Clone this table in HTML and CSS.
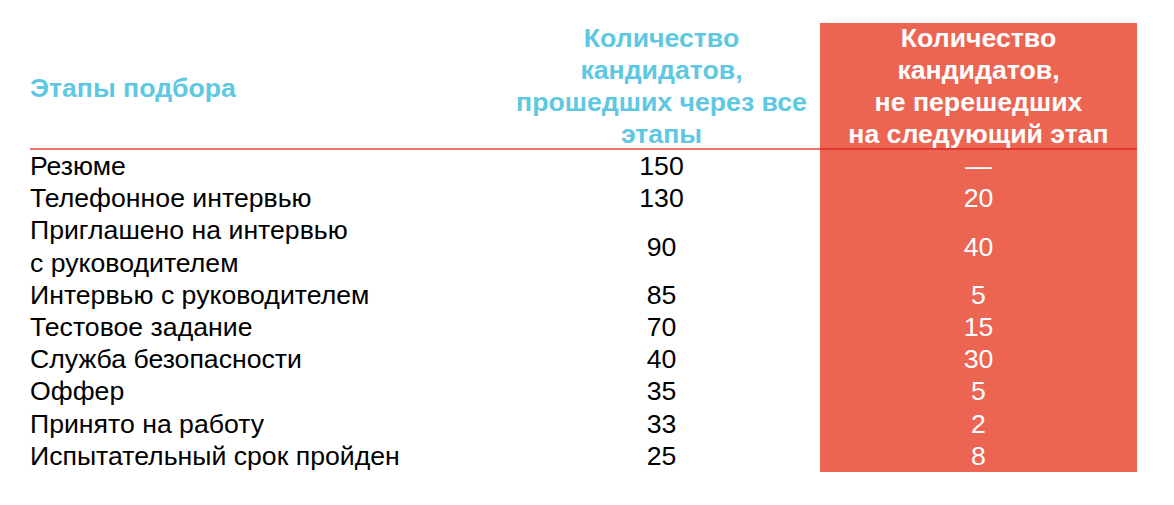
FILE: index.html
```html
<!DOCTYPE html>
<html lang="ru">
<head>
<meta charset="utf-8">
<title>Этапы подбора</title>
<link rel="stylesheet" href="styles.css">
</head>
<body>
<div class="table">
  <div class="th th-stage">Этапы подбора</div>
  <div class="th th-passed">Количество<br>кандидатов,<br>прошедших через все<br>этапы</div>
  <div class="th th-failed">Количество<br>кандидатов,<br>не перешедших<br>на следующий этап</div>

  <div class="td stage">Резюме</div><div class="td num">150</div><div class="td fail">—</div>
  <div class="td stage">Телефонное интервью</div><div class="td num">130</div><div class="td fail">20</div>
  <div class="td stage">Приглашено на интервью<br>с руководителем</div><div class="td num">90</div><div class="td fail">40</div>
  <div class="td stage">Интервью с руководителем</div><div class="td num">85</div><div class="td fail">5</div>
  <div class="td stage">Тестовое задание</div><div class="td num">70</div><div class="td fail">15</div>
  <div class="td stage">Служба безопасности</div><div class="td num">40</div><div class="td fail">30</div>
  <div class="td stage">Оффер</div><div class="td num">35</div><div class="td fail">5</div>
  <div class="td stage">Принято на работу</div><div class="td num">33</div><div class="td fail">2</div>
  <div class="td stage">Испытательный срок пройден</div><div class="td num">25</div><div class="td fail">8</div>
</div>
</body>
</html>
```

FILE: styles.css
```css
html, body {
  margin: 0;
  padding: 0;
  background: #ffffff;
}

body {
  font-family: "Liberation Sans", Arial, sans-serif;
  color: #000000;
}

.table {
  display: grid;
  grid-template-columns: 473px 317px 317px;
  margin: 23px 0 0 30px;
  font-size: 26.67px;
  line-height: 32px;
}

.th {
  box-sizing: border-box;
  font-weight: bold;
  height: 127px;
  padding-top: 1px;
  border-bottom: 2px solid #f2716a;
  display: flex;
  align-items: center;
}

.th-stage {
  color: #5ec8e2;
  padding-top: 4px;
}

.th-passed {
  color: #5ec8e2;
  justify-content: center;
  text-align: center;
}

.th-failed {
  color: #ffffff;
  background: #ec6553;
  justify-content: center;
  text-align: center;
  border-bottom-color: #e0392f;
}

.td {
  display: flex;
  align-items: center;
  line-height: 32.2px;
}

.num {
  justify-content: center;
}

.fail {
  justify-content: center;
  background: #ec6553;
  color: #ffffff;
}
```
